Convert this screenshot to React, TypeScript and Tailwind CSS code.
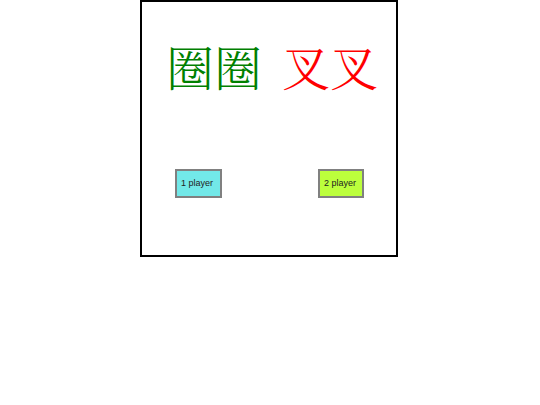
export default function App() {
  return (
    <div className="w-[540px] h-[405px] bg-white">
      <div className="ml-[140px] w-[258px] h-[257px] border-2 border-black flex flex-col">
        <div
          className="mt-[32px] pl-[6px] flex justify-center gap-[20px] text-[48px] leading-[64px]"
          style={{ fontFamily: '"Noto Serif CJK SC", "Noto Serif CJK JP", "Noto Sans CJK SC", serif' }}
        >
          <span className="text-[#008000] font-light">圈圈</span>
          <span className="text-[#ff0000] font-light">叉叉</span>
        </div>
        <div className="mt-[71px] flex justify-between pl-[33px] pr-[32px]">
          <div className="w-[47px] h-[29px] border-2 border-[#808080] bg-[#72e8e8] flex items-center pl-[4px] text-[9px] text-[#222]" style={{ fontFamily: '"Liberation Sans", Arial, sans-serif' }}>
            1 player
          </div>
          <div className="w-[46px] h-[29px] border-2 border-[#808080] bg-[#bcff3c] flex items-center pl-[4px] text-[9px] text-[#222]" style={{ fontFamily: '"Liberation Sans", Arial, sans-serif' }}>
            2 player
          </div>
        </div>
      </div>
    </div>
  );
}
